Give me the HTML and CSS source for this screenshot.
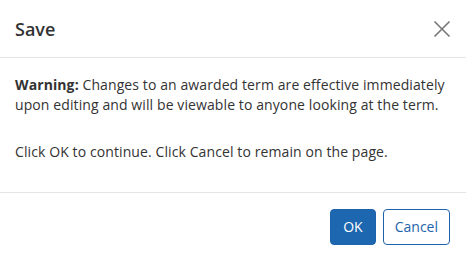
FILE: index.html
```html
<!DOCTYPE html>
<html>
<head>
<meta charset="utf-8">
<link rel="stylesheet" href="styles.css">
</head>
<body>
<div class="modal">
  <div class="modal-header">
    <h4 class="modal-title">Save</h4>
    <button class="close" aria-label="Close">
      <svg width="18" height="18" viewBox="0 0 18 18"><path d="M1.5 1.5 L16.5 16.5 M16.5 1.5 L1.5 16.5" stroke="#777" stroke-width="1.6" fill="none"/></svg>
    </button>
  </div>
  <div class="modal-body">
    <p><strong>Warning:</strong> Changes to an awarded term are effective immediately upon editing and will be viewable to anyone looking at the term.</p>
    <p>Click OK to continue. Click Cancel to remain on the page.</p>
  </div>
  <div class="modal-footer">
    <button class="btn btn-primary">OK</button>
    <button class="btn btn-default">Cancel</button>
  </div>
</div>
</body>
</html>
```
FILE: styles.css
```css
html, body {
  margin: 0;
  padding: 0;
  background: #fff;
}
body {
  font-family: "Open Sans", "Noto Sans", sans-serif;
  color: #333;
  font-size: 14px;
  line-height: 20px;
}
.modal {
  width: 466px;
  height: 260px;
  box-sizing: border-box;
  display: flex;
  flex-direction: column;
}
.modal-header {
  display: flex;
  align-items: center;
  justify-content: space-between;
  padding: 15px;
  height: 58px;
  box-sizing: border-box;
  border-bottom: 1px solid #e5e5e5;
}
.modal-title {
  margin: 0;
  font-size: 18px;
  font-weight: 600;
  color: #333;
}
.close {
  background: none;
  border: 0;
  padding: 0;
  width: 18px;
  height: 18px;
  display: flex;
}
.modal-body {
  padding: 17px 15px 0 15px;
  height: 135px;
  box-sizing: border-box;
  border-bottom: 1px solid #e5e5e5;
  letter-spacing: 0.1px;
}
.modal-body p {
  margin: 0 0 27px 0;
}
.modal-footer {
  display: flex;
  justify-content: flex-end;
  gap: 7px;
  padding: 16px 16px 15px 15px;
}
.btn {
  font-family: inherit;
  font-size: 14px;
  line-height: 20px;
  border-radius: 4px;
  border: 1px solid #1d63ab;
  cursor: pointer;
}
.btn-primary {
  background: #1d66b0;
  color: #fff;
  padding: 7px 12px;
}
.btn-default {
  background: #fff;
  color: #1d63ab;
  padding: 7px 11px;
}
```
